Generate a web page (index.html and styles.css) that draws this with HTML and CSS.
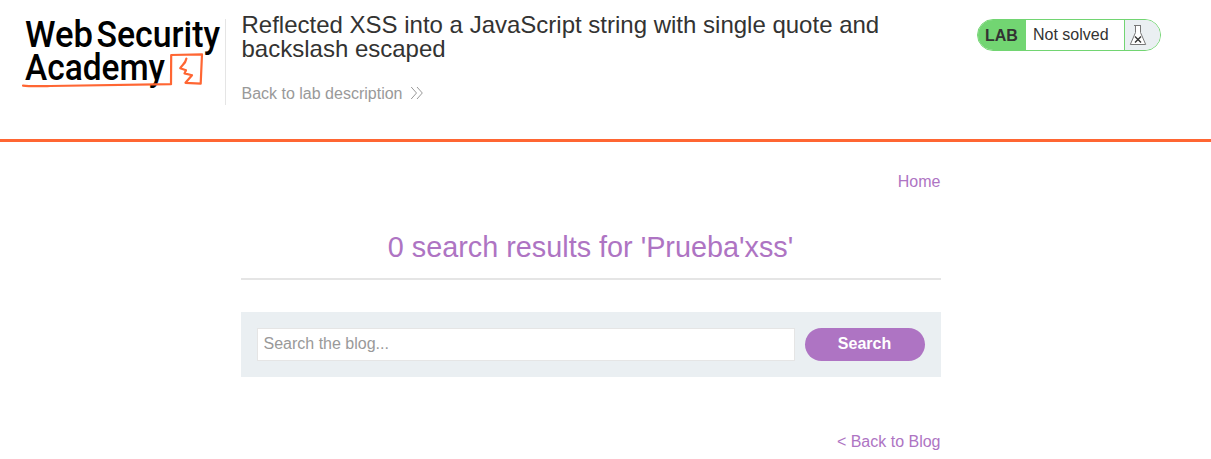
FILE: index.html
```html
<!DOCTYPE html>
<html lang="en">
<head>
<meta charset="utf-8">
<title>Reflected XSS into a JavaScript string with single quote and backslash escaped</title>
<link rel="stylesheet" href="styles.css">
</head>
<body>
<header class="lab-header">
  <svg class="logo" width="205" height="86" viewBox="20 6 205 86" role="img" aria-label="Web Security Academy">
    <g class="logo-text">
      <text x="25" y="47" textLength="68" lengthAdjust="spacingAndGlyphs">Web</text>
      <text x="96.500" y="47" textLength="123.500" lengthAdjust="spacingAndGlyphs">Security</text>
      <text x="25" y="80" textLength="140" lengthAdjust="spacingAndGlyphs">Academy</text>
    </g>
    <g class="logo-mark">
      <path d="M23 85.600 C30 86.500 36 86.300 50 86 C90 85.300 130 84.800 171 84.200 L171.200 55 L202 54.300 L200.700 83.600 L185.500 82.800 L192 75.200 L184.500 73.400 L186 70.200 L180.200 68.200 C182 65 185.500 64 186.400 58.500"/>
    </g>
  </svg>
  <div class="title-container">
    <h2 class="title">Reflected XSS into a JavaScript string with single quote and backslash escaped</h2>
    <a class="link-back">Back to lab description
      <svg width="14" height="14" viewBox="0 0 14 14"><path d="M1.2 1 L6.5 7 L1.2 13 M7 1 L12.3 7 L7 13"/></svg>
    </a>
  </div>
  <div class="status">
    <span class="status-lab">LAB</span>
    <span class="status-text">Not solved</span>
    <span class="status-icon">
      <svg width="18" height="22" viewBox="0 0 18 22">
        <path class="flask" d="M5 1.500 H12 M6.500 1.500 V8.500 L1.300 20.500 H16.700 L11.500 8.500 V1.500"/>
        <path class="cross" d="M6 12.500 L12 18.500 M12 12.500 L6 18.500"/>
      </svg>
    </span>
  </div>
</header>
<main class="page">
  <nav class="top-links"><a>Home</a></nav>
  <h1 class="results">0 search results for 'Prueba'xss'</h1>
  <form class="search">
    <input class="search-field" type="text" placeholder="Search the blog...">
    <button class="search-button" type="button">Search</button>
  </form>
  <div class="back"><a>&lt; Back to Blog</a></div>
</main>
</body>
</html>
```

FILE: styles.css
```css
* { box-sizing: border-box; }
html { overflow: hidden; }
body {
  margin: 0;
  background: #fff;
  color: #333332;
  font: 16px/19px "Liberation Sans", Arial, sans-serif;
}
.lab-header {
  display: flex;
  align-items: flex-start;
  height: 142px;
  padding: 6px 50px 0 20px;
  border-bottom: 3px solid #ff6633;
}
.logo { flex: none; overflow: visible; }
.logo-text { font: 500 36.5px Roboto, sans-serif; fill: #000; }
.logo-mark { fill: none; stroke: #ff6633; stroke-width: 2.2; stroke-linejoin: round; stroke-linecap: round; }
.title-container {
  width: 700px;
  height: 86px;
  margin-top: 13px;
  padding: 0 36px 0 15.5px;
  border-left: 1px solid #e5e5e5;
}
.title {
  margin: -6px 0 0;
  font-size: 24px;
  font-weight: 400;
  line-height: 24px;
}
.link-back {
  display: flex;
  align-items: center;
  gap: 8px;
  margin-top: 23px;
  color: #999;
}
.link-back svg { margin-top: -2px; fill: none; stroke: #999; stroke-width: 1; }
.status {
  display: flex;
  width: 184px;
  height: 32px;
  margin: 13px 0 0 auto;
  overflow: hidden;
  border: 1px solid #72d572;
  border-radius: 16px;
  line-height: 30px;
}
.status-lab { width: 48px; padding: 1px 0 0 7px; background: #72d572; font-weight: 700; }
.status-text { width: 98px; padding-left: 7px; }
.status-icon {
  display: flex;
  flex: 1;
  align-items: center;
  padding-left: 4px;
  background: #eaeff2;
  border-left: 1px solid #72d572;
}
.flask { fill: #fff; stroke: #777; stroke-width: 1; }
.cross { stroke: #333; stroke-width: 1.4; }
.page { width: 700px; margin: 0 0 0 240.5px; padding-top: 30px; }
.page a { color: #ae74c3; }
.top-links { text-align: right; }
.results {
  height: 69px;
  margin: 20px 0 32px;
  padding-top: 19px;
  border-bottom: 2px solid #e5e5e5;
  color: #ae74c3;
  font-size: 28.8px;
  font-weight: 400;
  line-height: 34px;
  text-align: center;
}
.search {
  display: flex;
  gap: 10px;
  height: 65px;
  margin: 0;
  padding: 16px;
  background: #eaeff2;
}
.search-field {
  flex: 1;
  padding: 0 6px 2px;
  border: 1px solid #e5e5e5;
  background: #fff;
  font: inherit;
}
.search-field::placeholder { color: #999; }
.search-button {
  width: 120px;
  padding: 0 0 2px;
  border: 0;
  border-radius: 17px;
  background: #ae74c3;
  color: #fff;
  font: inherit;
  font-weight: 700;
}
.back { margin-top: 55px; text-align: right; }
```
